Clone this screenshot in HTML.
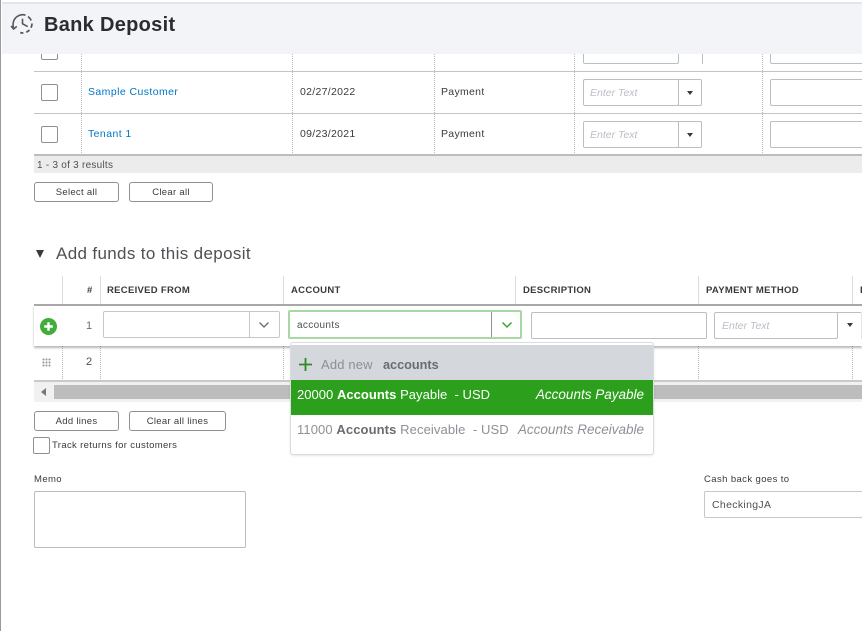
<!DOCTYPE html>
<html><head><meta charset="utf-8">
<style>
html,body{margin:0;padding:0;background:#fff}
body{width:862px;height:631px;position:relative;overflow:hidden;font-family:"Liberation Sans",sans-serif;color:#393a3d;font-size:10.5px}
.a{position:absolute;box-sizing:border-box}
.t{position:absolute;white-space:nowrap;line-height:14px}
.hl{position:absolute;height:1px;background:#c4c4c4}
.vd{position:absolute;width:0;border-left:1px dotted #bbb}
.vs{position:absolute;width:1px;background:#dcdcdc}
.cb{position:absolute;box-sizing:border-box;width:17px;height:17px;border:1px solid #8d9096;border-radius:2px;background:#fff}
.btn{position:absolute;box-sizing:border-box;height:20px;border:1px solid #8d9096;border-radius:3px;background:#fff;text-align:center;line-height:20px;font-size:9.5px;color:#393a3d;letter-spacing:.3px}
.inp{position:absolute;box-sizing:border-box;border:1px solid #babec5;border-radius:2px;background:#fff}
.et{position:absolute;font-style:italic;color:#babec5;font-size:10.5px;white-space:nowrap}
.car{position:absolute;width:0;height:0;border-left:3.5px solid transparent;border-right:3.5px solid transparent;border-top:4px solid #393a3d}
.th{position:absolute;font-weight:bold;font-size:9.5px;color:#393a3d;white-space:nowrap;line-height:12px;letter-spacing:.3px}
.ph{position:absolute;left:0;top:0}
</style></head><body>
<div class="a" style="left:0;top:0;width:1px;height:631px;background:#9a9a9a"></div>

<!-- upper table -->
<div class="hl" style="left:34px;top:71px;width:828px"></div>
<div class="hl" style="left:34px;top:113px;width:828px"></div>
<div class="a" style="left:34px;top:154px;width:828px;height:2px;background:#bdbdbd"></div>
<div class="a" style="left:34px;top:156px;width:828px;height:17px;background:#ececec"></div>
<div class="vd" style="left:81px;top:54px;height:101px"></div>
<div class="vd" style="left:292px;top:54px;height:101px"></div>
<div class="vd" style="left:434px;top:54px;height:101px"></div>
<div class="vd" style="left:574px;top:54px;height:101px"></div>
<div class="vd" style="left:762px;top:54px;height:101px"></div>

<div class="cb" style="left:41px;top:43px"></div>
<div class="cb" style="left:41px;top:84px"></div>
<div class="cb" style="left:41px;top:126px"></div>

<div class="t" style="left:88px;top:85px;color:#0077c5;letter-spacing:.42px">Sample Customer</div>
<div class="t" style="left:88px;top:127px;color:#0077c5;letter-spacing:.42px">Tenant 1</div>
<div class="t" style="left:300px;top:85px;letter-spacing:.3px">02/27/2022</div>
<div class="t" style="left:300px;top:127px;letter-spacing:.3px">09/23/2021</div>
<div class="t" style="left:441px;top:85px;letter-spacing:.3px">Payment</div>
<div class="t" style="left:441px;top:127px;letter-spacing:.3px">Payment</div>

<div class="inp" style="left:583px;top:37px;width:96px;height:27px"></div>
<div class="a" style="left:678px;top:37px;width:25px;height:27px;border:1px solid #babec5;border-left:0;border-bottom:0"></div>
<div class="inp" style="left:770px;top:37px;width:110px;height:27px"></div>

<div class="inp" style="left:583px;top:79px;width:96px;height:27px"></div>
<div class="a" style="left:678px;top:79px;width:24px;height:27px;border:1px solid #babec5;border-left:0;border-radius:0 2px 2px 0"></div>
<div class="et" style="left:590px;top:87px">Enter Text</div>
<div class="car" style="left:687px;top:91px"></div>
<div class="inp" style="left:770px;top:79px;width:110px;height:27px"></div>

<div class="inp" style="left:583px;top:121px;width:96px;height:27px"></div>
<div class="a" style="left:678px;top:121px;width:24px;height:27px;border:1px solid #babec5;border-left:0;border-radius:0 2px 2px 0"></div>
<div class="et" style="left:590px;top:129px">Enter Text</div>
<div class="car" style="left:687px;top:133px"></div>
<div class="inp" style="left:770px;top:121px;width:110px;height:27px"></div>

<div class="t" style="left:37px;top:159px;font-size:10px;letter-spacing:.25px;color:#4f5156">1 - 3 of 3 results</div>
<div class="btn" style="left:34px;top:182px;width:85px">Select all</div>
<div class="btn" style="left:129px;top:182px;width:84px">Clear all</div>

<!-- header -->
<div class="a" style="left:2px;top:2px;width:860px;height:2px;background:#e4e5e8"></div>
<div class="a" style="left:2px;top:4px;width:860px;height:50px;background:#f3f4f8"></div>
<svg class="ph" style="left:10px;top:11px" width="25" height="24" viewBox="0 0 25 24" fill="none" stroke="#54565b" stroke-width="1.6">
<path d="M3.6 17.5C2.2 12.5 3.6 8 7 5.6 9.5 3.6 13 3.2 15.5 4.2"/>
<path d="M18 5.5a10 10 0 0 1 3.2 4M22 12.5a9.5 9.5 0 0 1-1 4.2M19.5 19a10 10 0 0 1-3.2 2.2M13.4 22a9 9 0 0 1-3.2-.4" stroke-width="1.7"/>
<path d="M12.5 7.8v5l5.2 2.8" stroke-width="1.6"/>
<path d="M1 15l2.6 3 3.2-2.6" stroke-width="1.6"/>
</svg>
<div class="t" style="left:44px;top:12px;font-size:20px;font-weight:bold;line-height:26px;color:#2b2c30;letter-spacing:.3px">Bank Deposit</div>

<!-- section heading -->
<div class="a" style="left:36px;top:250px;width:0;height:0;border-left:4.5px solid transparent;border-right:4.5px solid transparent;border-top:8px solid #393a3d"></div>
<div class="t" style="left:56px;top:244px;font-size:17px;line-height:20px;color:#4f5156;letter-spacing:.35px">Add funds to this deposit</div>

<!-- lower table header -->
<div class="vs" style="left:62px;top:276px;height:28px"></div>
<div class="vs" style="left:100px;top:276px;height:28px"></div>
<div class="vs" style="left:283px;top:276px;height:28px"></div>
<div class="vs" style="left:515px;top:276px;height:28px"></div>
<div class="vs" style="left:698px;top:276px;height:28px"></div>
<div class="vs" style="left:852px;top:276px;height:28px"></div>
<div class="th" style="left:87px;top:285px">#</div>
<div class="th" style="left:107px;top:285px">RECEIVED FROM</div>
<div class="th" style="left:291px;top:285px">ACCOUNT</div>
<div class="th" style="left:523px;top:285px">DESCRIPTION</div>
<div class="th" style="left:706px;top:285px">PAYMENT METHOD</div>
<div class="th" style="left:860px;top:285px">P</div>

<!-- row 2 -->
<div class="vd" style="left:62px;top:346px;height:35px"></div>
<div class="vd" style="left:100px;top:346px;height:35px"></div>
<div class="vd" style="left:283px;top:346px;height:35px"></div>
<div class="vd" style="left:698px;top:346px;height:35px"></div>
<div class="vd" style="left:852px;top:346px;height:35px"></div>
<div class="a" style="left:34px;top:380px;width:828px;height:2px;background:#c9c9c9"></div>
<div class="a" style="left:42px;top:358px;width:9px;height:9px;background-image:radial-gradient(#9b9b9b 1px,transparent 1.1px);background-size:3px 3px"></div>
<div class="t" style="left:86px;top:355px;font-size:11px;color:#4f5156">2</div>

<!-- row 1 -->
<div class="a" style="left:34px;top:304px;width:828px;height:42px;background:#fff;border-top:2px solid #a8a8a8;box-shadow:0 2px 2px rgba(0,0,0,.28)"></div>
<svg class="ph" style="left:40px;top:318px" width="17" height="17" viewBox="0 0 17 17"><circle cx="8.5" cy="8.5" r="8.5" fill="#43ad3a"/><path d="M8.5 4.2v8.6M4.2 8.5h8.6" stroke="#fff" stroke-width="2.4"/></svg>
<div class="t" style="left:86px;top:319px;font-size:11px;color:#6b6c72">1</div>
<div class="inp" style="left:103px;top:311px;width:177px;height:27px;border-color:#c4c7cc"></div>
<div class="a" style="left:249px;top:312px;width:1px;height:25px;background:#c4c7cc"></div>
<svg class="ph" style="left:258px;top:321px" width="12" height="8" viewBox="0 0 12 8" fill="none"><path d="M1.5 1.5L6 6l4.5-4.5" stroke="#6b6c72" stroke-width="1.3"/></svg>
<div class="inp" style="left:288px;top:310px;width:234px;height:29px;border:2px solid #a9d9a2;outline:0"></div>
<div class="a" style="left:491px;top:312px;width:1px;height:25px;background:#8d9096"></div>
<svg class="ph" style="left:501px;top:321px" width="12" height="8" viewBox="0 0 12 8" fill="none"><path d="M1.5 1.5L6 6l4.5-4.5" stroke="#3aa52f" stroke-width="1.5"/></svg>
<div class="t" style="left:297px;top:319px;font-size:10px;letter-spacing:.35px;color:#4f5156">accounts</div>
<div class="inp" style="left:531px;top:312px;width:176px;height:27px;border-color:#babec5"></div>
<div class="inp" style="left:714px;top:312px;width:124px;height:27px;border-color:#babec5"></div>
<div class="a" style="left:837px;top:312px;width:25px;height:27px;border-top:1px solid #babec5;border-right:1px solid #e4e4e4;border-radius:0 2px 0 0"></div>
<div class="et" style="left:722px;top:320px">Enter Text</div>
<div class="car" style="left:847px;top:323px"></div>

<!-- scrollbar -->
<div class="a" style="left:34px;top:382px;width:828px;height:20px;background:#f1f1f1"></div>
<div class="a" style="left:54px;top:385px;width:808px;height:14px;background:#bdbdbd"></div>
<div class="a" style="left:41px;top:388px;width:0;height:0;border-top:4px solid transparent;border-bottom:4px solid transparent;border-right:5px solid #777"></div>

<!-- dropdown -->
<div class="a" style="left:290px;top:342px;width:364px;height:113px;background:#fff;border:1px solid #dcdde0;border-radius:3px;box-shadow:0 1px 2px rgba(0,0,0,.1)"></div>
<div class="a" style="left:291px;top:345px;width:362px;height:35px;background:#d4d7dc"></div>
<div class="a" style="left:291px;top:380px;width:362px;height:35px;background:#2ca01c"></div>
<svg class="ph" style="left:298px;top:357px" width="15" height="15" viewBox="0 0 15 15"><path d="M7.5 1v13M1 7.5h13" stroke="#2e8b24" stroke-width="1.8"/></svg>
<div class="t" style="left:321px;top:358px;font-size:13px;color:#8d9096;letter-spacing:.15px">Add new</div>
<div class="t" style="left:383px;top:358px;font-size:12.7px;font-weight:bold;color:#6b6c72">accounts</div>
<div class="t" style="left:297px;top:388px;font-size:13px;color:#fff;letter-spacing:.03px">20000 <b>Accounts</b> Payable&nbsp; - USD</div>
<div class="t" style="right:218px;top:388px;font-size:13.5px;color:#fff;font-style:italic">Accounts Payable</div>
<div class="t" style="left:297px;top:423px;font-size:13px;color:#8d9096;letter-spacing:.1px">11000 <b style="color:#6b6c72">Accounts</b> Receivable&nbsp; - USD</div>
<div class="t" style="right:218px;top:423px;font-size:13.5px;color:#8d9096;font-style:italic">Accounts Receivable</div>

<!-- lower buttons -->
<div class="btn" style="left:34px;top:411px;width:85px">Add lines</div>
<div class="btn" style="left:129px;top:411px;width:97px">Clear all lines</div>
<div class="cb" style="left:33px;top:437px"></div>
<div class="t" style="left:52px;top:439px;font-size:9.5px;letter-spacing:.35px">Track returns for customers</div>

<div class="t" style="left:34px;top:473px;font-size:9.5px;letter-spacing:.4px">Memo</div>
<div class="inp" style="left:34px;top:491px;width:212px;height:57px;border-color:#b9bcc2"></div>
<div class="t" style="left:704px;top:473px;font-size:9.5px;letter-spacing:.4px">Cash back goes to</div>
<div class="inp" style="left:704px;top:491px;width:170px;height:27px;border-color:#c4c7cc"></div>
<div class="t" style="left:712px;top:498px;font-size:10.5px;letter-spacing:.33px;color:#4f5156">CheckingJA</div>
</body></html>
